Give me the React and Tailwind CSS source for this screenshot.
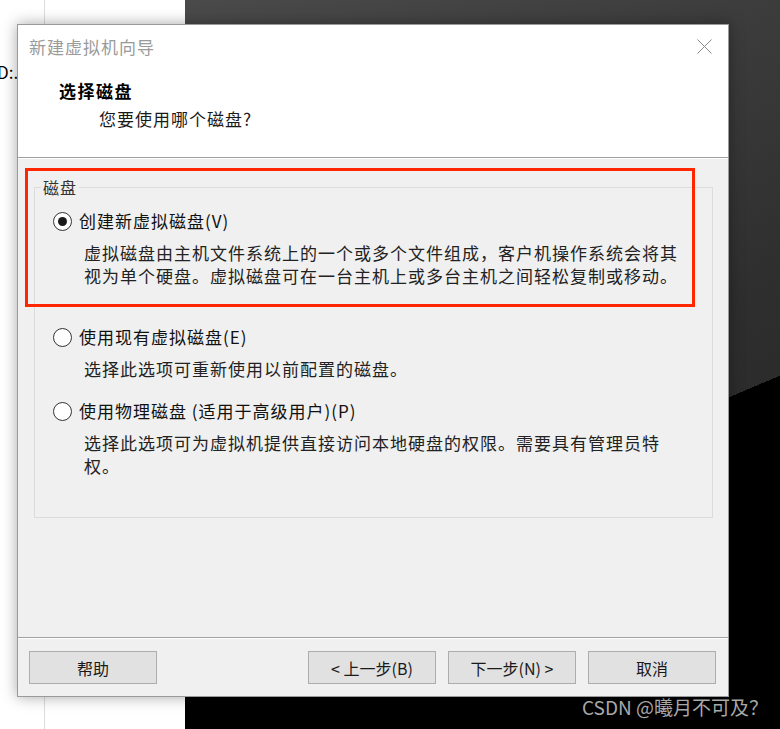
import React from "react";

const font = "font-['Noto_Sans_CJK_SC','Noto_Sans',sans-serif]";

function Radio({ checked }) {
  return (
    <span className="flex h-[19px] w-[19px] shrink-0 items-center justify-center rounded-full border border-[#333] bg-white">
      {checked && <span className="h-[9px] w-[9px] rounded-full bg-[#1a1a1a]" />}
    </span>
  );
}

function Option({ checked, label, lines, className }) {
  return (
    <div className={className}>
      <div className="flex h-6 items-center gap-[7px] pl-[18px]">
        <Radio checked={checked} />
        <span className="text-[17px] leading-6 tracking-[1px] text-[#111]">{label}</span>
      </div>
      <div className="mt-[8px] pl-[49px] text-[17px] leading-[23px] tracking-[1px] text-[#222]">
        {lines.map((l, i) => (
          <div key={i} className="whitespace-nowrap">{l}</div>
        ))}
      </div>
    </div>
  );
}

function Btn({ children }) {
  return (
    <button className="flex h-[33px] w-[128px] items-center justify-center border border-[#adadad] bg-[#e1e1e1] text-[16px] text-[#1a1a1a]">
      {children}
    </button>
  );
}

export default function App() {
  return (
    <div className={`relative grid h-[729px] w-[780px] grid-cols-[185px_1fr] overflow-hidden ${font}`}>
      <div className="flex bg-white">
        <div className="w-[45px] border-r border-[#dcdcdc] pt-[60px]">
          <div className="-ml-[3px] text-[17px] leading-6 text-black">D:.</div>
        </div>
      </div>
      <div className="bg-[linear-gradient(157deg,#4a4a4a_0%,#3c3c3c_26%,#2e2e2e_55%,#2c2c2c_64%,#000_64%)]" />

      {/* dialog window */}
      <div className="absolute left-[17px] top-[24px] flex h-[673px] w-[712px] flex-col border border-[#9a9a9a] bg-[#f0f0f0] shadow-[0_0_14px_rgba(0,0,0,0.35)]">
        <div className="h-[133px] border-b border-[#a0a0a0] bg-white">
          <div className="mt-[11px] flex h-[22px] items-center justify-between pl-[11px] pr-[16px]">
            <span className="text-[17px] tracking-[1px] text-[#9a9a9a]">新建虚拟机向导</span>
            <svg width="15" height="15" viewBox="0 0 15 15" className="mt-[-1px]">
              <path d="M0.5 0.5L14.5 14.5M14.5 0.5L0.5 14.5" stroke="#8a8a8a" strokeWidth="1" fill="none" />
            </svg>
          </div>
          <div className="mt-[22px] pl-[41px] text-[17px] font-bold leading-[22px] tracking-[1.5px] text-black">选择磁盘</div>
          <div className="mt-[6px] pl-[81px] text-[17px] leading-[22px] tracking-[1px] text-[#1a1a1a]">您要使用哪个磁盘?</div>
        </div>

        <div className="flex-1 border-t border-white pt-[28px]">
          <div className="relative ml-[16px] mr-[15px] h-[331px] border border-[#dcdcdc]">
            <span className="absolute left-[6px] top-[-12px] bg-[#f0f0f0] px-[2px] text-[16px] leading-[22px] tracking-[1px] text-[#333]">磁盘</span>
            <Option
              className="pt-[21px]"
              checked
              label="创建新虚拟磁盘(V)"
              lines={[
                "虚拟磁盘由主机文件系统上的一个或多个文件组成，客户机操作系统会将其",
                "视为单个硬盘。虚拟磁盘可在一台主机上或多台主机之间轻松复制或移动。",
              ]}
            />
            <Option
              className="mt-[38px]"
              label="使用现有虚拟磁盘(E)"
              lines={["选择此选项可重新使用以前配置的磁盘。"]}
            />
            <Option
              className="mt-[19px]"
              label="使用物理磁盘 (适用于高级用户)(P)"
              lines={["选择此选项可为虚拟机提供直接访问本地硬盘的权限。需要具有管理员特", "权。"]}
            />
          </div>
        </div>

        <div className="border-t border-[#a0a0a0]">
          <div className="flex h-[58px] items-start border-t border-white pl-[11px] pr-[12px] pt-[12px]">
            <Btn>帮助</Btn>
            <div className="ml-auto flex gap-[12px]">
              <Btn>&lt; 上一步(B)</Btn>
              <Btn>下一步(N) &gt;</Btn>
              <Btn>取消</Btn>
            </div>
          </div>
        </div>
      </div>

      {/* red annotation box */}
      <div className="pointer-events-none absolute left-[25px] top-[168px] h-[139px] w-[670px] border-[3px] border-[#ff2600]" />

      {/* watermark */}
      <div className="absolute left-[582px] top-[695px] text-[19px] leading-6 text-[#a8a8a8]">CSDN @曦月不可及？</div>
    </div>
  );
}
